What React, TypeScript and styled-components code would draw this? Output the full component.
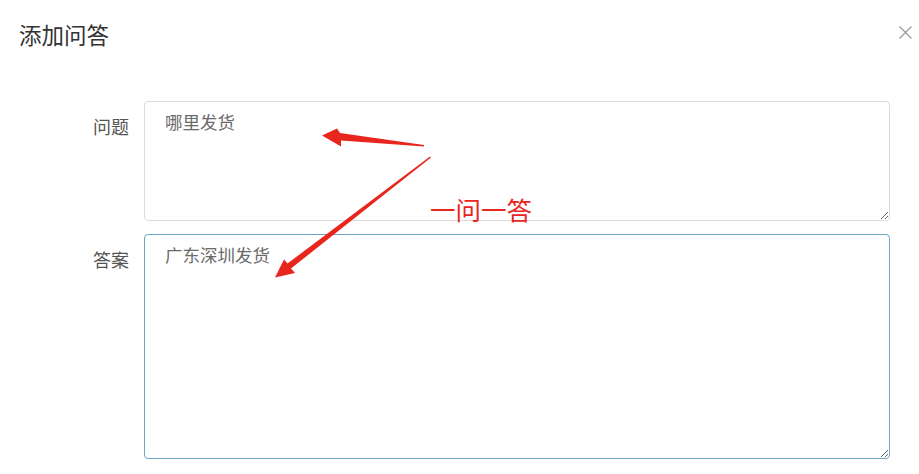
import styled, { createGlobalStyle } from "styled-components";

const GlobalStyle = createGlobalStyle`
  html, body {
    margin: 0;
    padding: 0;
    background: #fff;
    font-family: "Noto Sans CJK SC", "Liberation Sans", sans-serif;
  }
`;

export default function App() {
  return (
    <>
      <GlobalStyle />
      <Dialog>
        <Header>
          <Title>添加问答</Title>
          <CloseButton aria-label="close">
            <svg width="13" height="13" viewBox="0 0 13 13">
              <path d="M0.5 0.5L12.5 12.5M12.5 0.5L0.5 12.5" stroke="#999" strokeWidth="1.2" fill="none" />
            </svg>
          </CloseButton>
        </Header>
        <Form>
          <Row>
            <Label>问题</Label>
            <Field $height={120} defaultValue="哪里发货" />
          </Row>
          <Row>
            <Label>答案</Label>
            <Field $height={225} $active defaultValue="广东深圳发货" />
          </Row>
        </Form>
        <Note>一问一答</Note>
        <Arrows width="919" height="474" viewBox="0 0 919 474">
          <polygon
            points="424,145 340,133 337,128.5 322,135.5 341,146.5 341,140.5 424,146.5"
            fill="#e8261e"
          />
          <polygon
            points="430,156.5 431,157.5 291,268.5 295,273 275,277.5 284,259.5 287.5,263.5"
            fill="#e8261e"
          />
        </Arrows>
      </Dialog>
    </>
  );
}

const Dialog = styled.div`
  position: relative;
  width: 919px;
  height: 474px;
  overflow: hidden;
`;

const Header = styled.div`
  display: flex;
  align-items: flex-start;
  justify-content: space-between;
  height: 70px;
  box-sizing: border-box;
  padding: 19px 7px 0 19px;
`;

const Title = styled.h4`
  margin: 0;
  font-size: 22.5px;
  line-height: 30px;
  font-weight: 400;
  color: #333;
`;

const CloseButton = styled.button`
  border: 0;
  background: none;
  padding: 0;
  margin-top: 7px;
  width: 13px;
  height: 13px;
  display: flex;
  cursor: pointer;
`;

const Form = styled.div`
  display: flex;
  flex-direction: column;
  gap: 13px;
  padding: 31px 29px 0 0;
`;

const Row = styled.div`
  display: flex;
  align-items: flex-start;
`;

const Label = styled.label`
  width: 144px;
  flex-shrink: 0;
  padding-right: 15px;
  padding-top: 12px;
  box-sizing: border-box;
  text-align: right;
  font-size: 18px;
  color: #555;
  line-height: 26px;
`;

const Field = styled.textarea<{ $height: number; $active?: boolean }>`
  flex: 1;
  height: ${(p) => p.$height}px;
  box-sizing: border-box;
  border: 1px solid ${(p) => (p.$active ? "#6ea6c6" : "#dcdcdc")};
  border-radius: 4px;
  padding: 7px 20px;
  font-family: "Noto Sans CJK SC", "Liberation Sans", sans-serif;
  font-size: 17.5px;
  line-height: 26px;
  color: #6a6a6a;
  outline: none;
  resize: vertical;
`;

const Note = styled.div`
  position: absolute;
  left: 430px;
  top: 192px;
  font-size: 25.5px;
  line-height: 34px;
  color: #e8261e;
`;

const Arrows = styled.svg`
  position: absolute;
  left: 0;
  top: 0;
  pointer-events: none;
`;
